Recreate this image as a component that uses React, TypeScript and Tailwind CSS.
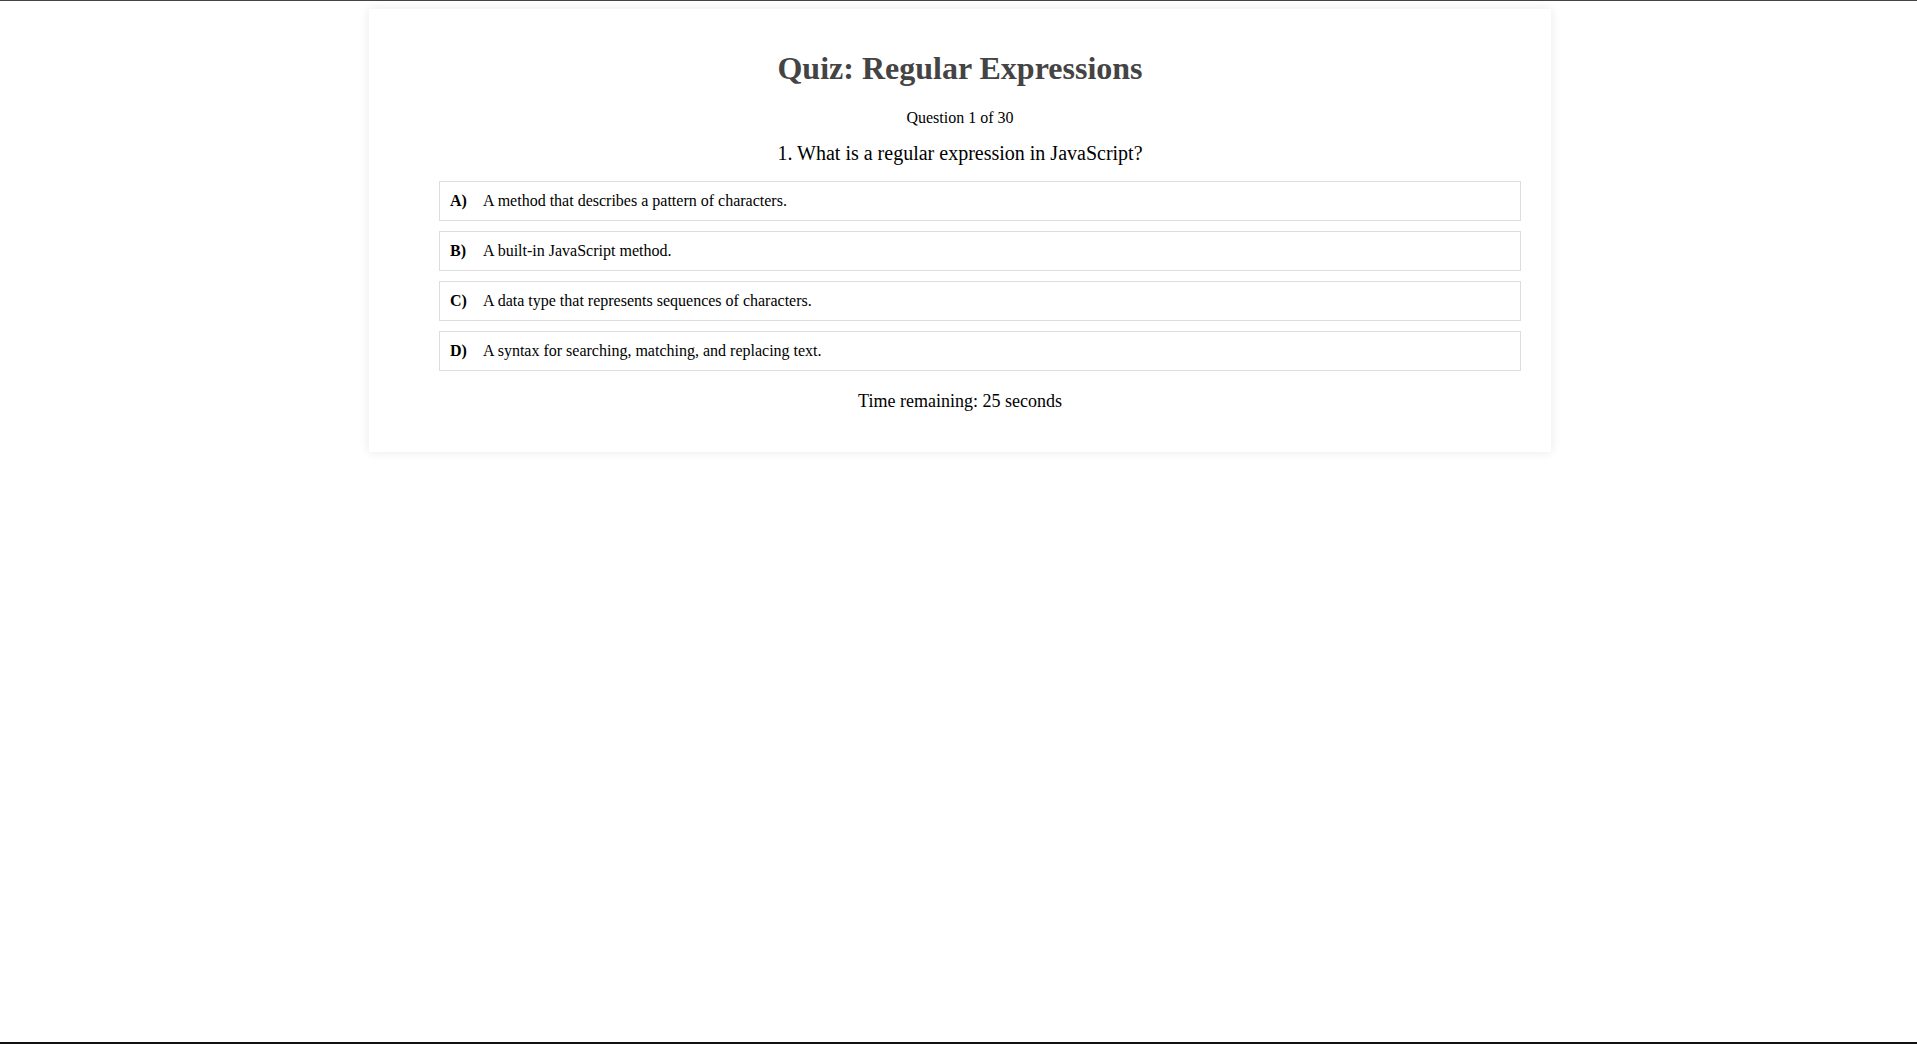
const options = [
  { label: 'A)', text: 'A method that describes a pattern of characters.' },
  { label: 'B)', text: 'A built-in JavaScript method.' },
  { label: 'C)', text: 'A data type that represents sequences of characters.' },
  { label: 'D)', text: 'A syntax for searching, matching, and replacing text.' },
];

function OptionRow({ label, text }: { label: string; text: string }) {
  return (
    <li className="flex items-center border border-[#dddddd] bg-white px-[10px] py-[10px] text-[16px] leading-[18px] text-black">
      <span className="w-[33px] shrink-0 font-bold">{label}</span>
      <span>{text}</span>
    </li>
  );
}

export default function App() {
  return (
    <div
      className="flex h-[1044px] flex-col border-t border-b-2 border-t-[#444444] border-b-[#111111] bg-white"
      style={{ fontFamily: '"Liberation Serif", "Times New Roman", serif' }}
    >
      <div className="ml-[369px] mt-[8px] w-[1182px] bg-white px-[30px] pt-[20px] pb-[40px] shadow-[0_0_10px_rgba(0,0,0,0.09)]">
        <h1 className="mt-[21px] text-center text-[32px] font-bold leading-[37px] text-[#444444]">
          Quiz: Regular Expressions
        </h1>
        <p className="mt-[22px] text-center text-[16px] leading-[18px] text-black">Question 1 of 30</p>
        <p className="mt-[15px] text-center text-[20px] leading-[23px] text-black">
          1. What is a regular expression in JavaScript?
        </p>
        <ul className="mt-[16px] flex flex-col gap-[10px] pl-[40px]">
          {options.map((o) => (
            <OptionRow key={o.label} label={o.label} text={o.text} />
          ))}
        </ul>
        <p className="mt-[20px] text-center text-[18px] leading-[21px] text-black">Time remaining: 25 seconds</p>
      </div>
    </div>
  );
}
